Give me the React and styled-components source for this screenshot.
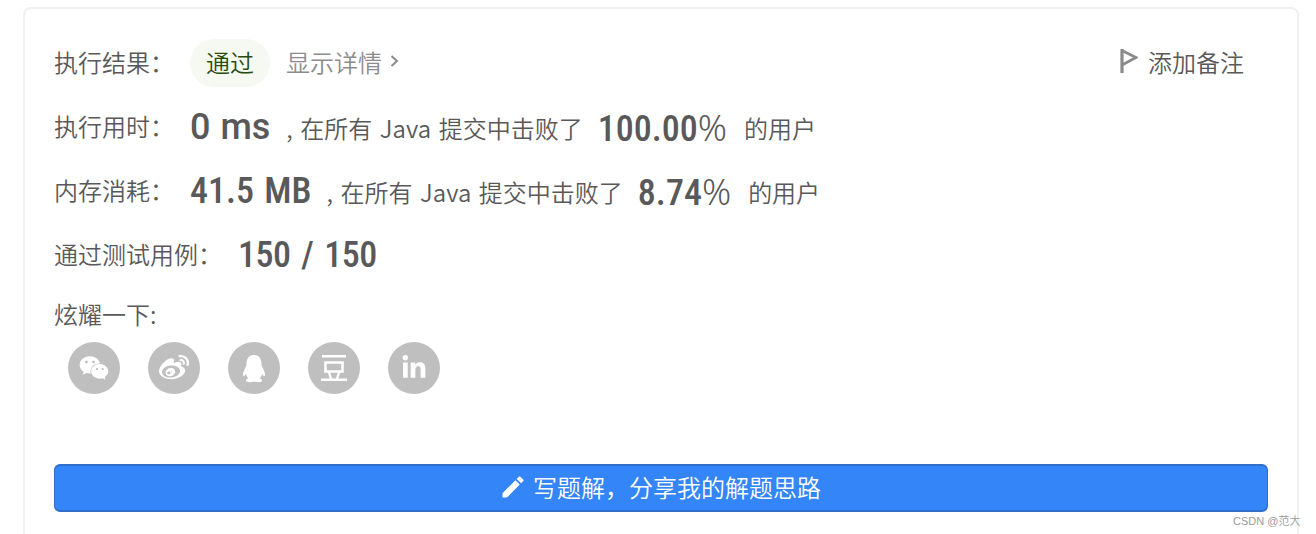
import React from "react";
import styled, { createGlobalStyle } from "styled-components";
import { FaWeixin, FaWeibo, FaLinkedinIn } from "react-icons/fa";
import { MdEdit } from "react-icons/md";

const GlobalStyle = createGlobalStyle`
  html, body {
    margin: 0;
    padding: 0;
    height: 534px;
    overflow: hidden;
    background: #fff;
    font-family: "Noto Sans CJK SC", sans-serif;
    font-weight: 350;
  }
`;

const Page = styled.div`
  width: 1316px;
  height: 534px;
  padding: 7px 17px 0 23px;
  box-sizing: border-box;
  overflow: hidden;
`;

const Card = styled.div`
  height: 560px;
  box-sizing: border-box;
  border: 2px solid #f0f0f0;
  border-radius: 8px;
  padding: 30px 29px 0;
`;

const Row = styled.div`
  display: flex;
  align-items: center;
  height: ${(p) => p.$height || 64}px;
  color: #595959;
  font-size: 24px;
  white-space: nowrap;
`;

const Label = styled.span`
  width: ${(p) => p.$width || 136}px;
  flex: none;
  padding-bottom: 3px;
`;

const Pill = styled.span`
  background: #f5f9f2;
  color: #274b10;
  height: 48px;
  width: 80px;
  box-sizing: border-box;
  padding-bottom: 4px;
  border-radius: 24px;
  display: flex;
  align-items: center;
  justify-content: center;
`;

const DetailLink = styled.span`
  display: flex;
  align-items: center;
  margin-left: 16px;
  padding-bottom: 4px;
  color: #8c8c8c;
`;

const Note = styled.span`
  margin-left: auto;
  margin-right: 24px;
  display: flex;
  align-items: center;
  gap: 10px;
  padding-bottom: 4px;
`;

const Stat = styled.span`
  font-family: Roboto, sans-serif;
  font-weight: 500;
  font-stretch: ${(p) => p.$stretch || 80}%;
  font-size: 36px;
  color: #595959;
  word-spacing: ${(p) => p.$gap || 0}px;
  letter-spacing: ${(p) => p.$track || 0}px;
`;

const Percent = styled.span`
  font-family: "Noto Sans", sans-serif;
  font-weight: 300;
  font-stretch: 100%;
  font-size: 36px;
`;

const Hint = styled.span`
  margin: ${(p) => p.$margin || "0"};
  word-spacing: 2.2px;
`;

const Social = styled.div`
  display: flex;
  gap: 28px;
  padding-left: 14px;
  margin-top: 7px;
`;

const Circle = styled.div`
  width: 52px;
  height: 52px;
  border-radius: 50%;
  background: #bfbfbf;
  color: #fff;
  display: flex;
  align-items: center;
  justify-content: center;
  font-size: ${(p) => p.$size || 30}px;
`;

const WriteButton = styled.div`
  height: 48px;
  margin-top: 70px;
  box-sizing: border-box;
  padding: 0 2px 3px 0;
  border: 1px solid #2f6fca;
  border-top-width: 2px;
  border-bottom-width: 2px;
  border-radius: 6px;
  background: #3385f8;
  color: #fff;
  display: flex;
  align-items: center;
  justify-content: center;
  gap: 6px;
  font-size: 24px;
`;

const Watermark = styled.span`
  position: absolute;
  left: 1233px;
  top: 512px;
  font-family: "Liberation Sans", "Noto Sans CJK SC", sans-serif;
  font-size: 11px;
  color: #9a9a9a;
`;

const Chevron = () => (
  <svg width="12" height="14" viewBox="0 0 12 14" style={{ marginLeft: 6 }}>
    <path d="M3.5 2 L9 7 L3.5 12" fill="none" stroke="#8c8c8c" strokeWidth="2" />
  </svg>
);

const Flag = () => (
  <svg width="20" height="26" viewBox="0 0 20 26">
    <path d="M4 1 V25" fill="none" stroke="#8a8a8a" strokeWidth="3.2" />
    <path d="M4 2.5 L18 9.5 L4 17" fill="none" stroke="#8a8a8a" strokeWidth="2.6" />
  </svg>
);

const Penguin = () => (
  <svg width="26" height="29" viewBox="0 0 26 29">
    <path
      fill="#fff"
      d="M13 1 C7 1 5.5 6 5.5 10 C5.5 12 4.5 13.5 3.5 15.5 C2 18.5 1.5 21 2.5 22 C3 22.5 4 21.5 5 20 C5.5 22 6.5 23.5 7.5 24.5 C5.5 25 4.5 26 5 27 C5.5 28.5 10 28.5 13 27.5 C16 28.5 20.5 28.5 21 27 C21.5 26 20.5 25 18.5 24.5 C19.5 23.5 20.5 22 21 20 C22 21.5 23 22.5 23.5 22 C24.5 21 24 18.5 22.5 15.5 C21.5 13.5 20.5 12 20.5 10 C20.5 6 19 1 13 1 Z"
    />
  </svg>
);

const Douban = () => (
  <svg width="28" height="28" viewBox="0 0 28 28">
    <path d="M2 1 H26 V3.4 H2 Z M1 24.6 H27 V27 H1 Z" fill="#fff" />
    <path d="M5.5 8.5 H22.5 V17.5 H5.5 Z" fill="none" stroke="#fff" strokeWidth="2.6" />
    <path d="M9 18 L11 25 M19 18 L17 25" fill="none" stroke="#fff" strokeWidth="2.4" />
  </svg>
);

const COLON = "\uFF1A";

export default function App() {
  return (
    <Page>
      <GlobalStyle />
      <Card>
        <Row $height={48}>
          <Label>执行结果{COLON}</Label>
          <Pill>通过</Pill>
          <DetailLink>显示详情<Chevron /></DetailLink>
          <Note><Flag />添加备注</Note>
        </Row>
        <Row $height={80}>
          <Label>执行用时{COLON}</Label>
          <Stat $stretch={92} $gap={1}>0 ms</Stat>
          <Hint $margin="0 15px 0 16px">, 在所有 Java 提交中击败了</Hint>
          <Stat>100.00<Percent>%</Percent></Stat>
          <Hint $margin="0 0 0 17px">的用户</Hint>
        </Row>
        <Row $height={48}>
          <Label>内存消耗{COLON}</Label>
          <Stat $gap={2}>41.5 MB</Stat>
          <Hint $margin="0 15px 0 15px">, 在所有 Java 提交中击败了</Hint>
          <Stat>8.74<Percent>%</Percent></Stat>
          <Hint $margin="0 0 0 17px">的用户</Hint>
        </Row>
        <Row $height={80}>
          <Label $width={184}>通过测试用例{COLON}</Label>
          <Stat $gap={3} $track={-0.5}>150 / 150</Stat>
        </Row>
        <Row $height={40}>
          <Label>炫耀一下:</Label>
        </Row>
        <Social>
          <Circle><FaWeixin /></Circle>
          <Circle><FaWeibo /></Circle>
          <Circle><Penguin /></Circle>
          <Circle><Douban /></Circle>
          <Circle $size={26}><FaLinkedinIn /></Circle>
        </Social>
        <WriteButton><MdEdit size={28} />写题解{"\uFF0C"}分享我的解题思路</WriteButton>
      </Card>
      <Watermark>CSDN @范大</Watermark>
    </Page>
  );
}
